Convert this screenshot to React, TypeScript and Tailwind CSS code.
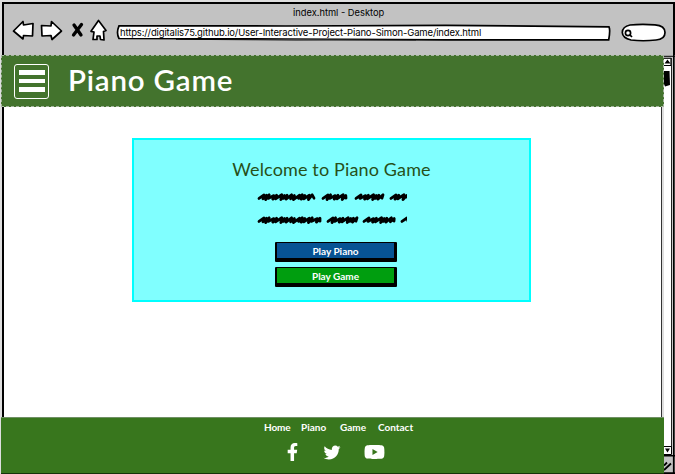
import React from "react";
import { FaFacebookF, FaTwitter, FaYoutube } from "react-icons/fa";

const links = [
  { label: "Home", box: "w-[26px] mr-[11px]", spacing: "tracking-[-0.1px]" },
  { label: "Piano", box: "w-[25px] mr-[14px]", spacing: "tracking-[0px]" },
  { label: "Game", box: "w-[27px] mr-[11px]", spacing: "tracking-[0px]" },
  { label: "Contact", box: "w-[36px]", spacing: "tracking-[0px]" },
];

function NavIcons() {
  return (
    <svg width="98" height="24" viewBox="11 18.5 98 24" fill="white" stroke="black" strokeWidth="1.7" strokeLinejoin="round" className="shrink-0">
      <path d="M13.5 30.5 L23 21 L23.5 24.5 L33 23 L32.5 35.5 L23.5 35 L23 38.5Z" />
      <path d="M41.5 25 L51 25.5 L51.5 21 L61.5 30.5 L52 39 L51 35 L42 35.5Z" />
      <path d="M74 24.5 L81 34.5 M81.5 24 L73.5 34.5" strokeWidth="3.3" strokeLinecap="round" />
      <path d="M98.5 20 L106 30 L103.5 31 L104 39.5 L100.5 39 L100 35.5 L97 35.5 L97 39 L93 39 L94 31.5 L91 30.8Z" />
    </svg>
  );
}

function AddressBar() {
  return (
    <div className="relative ml-[7px] mt-[5px] h-[18px] w-[495px] shrink-0">
      <svg width="495" height="18" viewBox="0 0 495 18" fill="white" stroke="black" className="absolute inset-0">
        <path strokeWidth="1.7" d="M3 1.8 L170 2 L330 1.4 L493 2.8 Q494.5 6 492.7 15.8 L330 15.9 L170 15 L3 14.5 Q0 9 3 1.8Z" />
        <path strokeWidth="1" d="M60 15.3 L180 16 L300 15.8" />
      </svg>
      <span className="absolute left-[4px] top-[2px] whitespace-nowrap text-[9.5px] leading-[13px] tracking-[-0.14px]">
        https://digitalis75.github.io/User-Interactive-Project-Piano-Simon-Game/index.html
      </span>
    </div>
  );
}

function SearchBox() {
  return (
    <svg width="46" height="20" viewBox="0 0 46 20" fill="white" stroke="black" strokeWidth="1.7" className="ml-[10px] mt-[4px] shrink-0">
      <path d="M9 2 Q20 .8 34 1.8 Q44 2.5 44 9.5 Q44 16.5 35 17 Q22 18.5 10 17 Q1.5 15 1.3 9.5 Q1.5 3.5 9 2Z" />
      <circle cx="7" cy="10" r="2.6" />
      <path d="M8.8 11.8 L11 14" />
    </svg>
  );
}

function Scribble({ second }: { second?: boolean }) {
  const words = second
    ? [[2, 64], [71, 100], [107, 138], [145, 152]]
    : [[2, 58], [66, 90], [99, 126], [134, 152]];
  return (
    <svg width="150" height="10" viewBox="0 0 150 10" fill="none" stroke="black" strokeWidth="2.8" strokeLinecap="round" strokeLinejoin="round" className="block">
      {words.map(([start, end], i) => {
        let path = `M${start} 6.4 L${start + 5} 3`;
        let n = i;
        for (let x = start + 5; x < end - 3; n++) {
          const step = [2.6, 2.6, 4.6, 2.8, 5.2][n % 5];
          const low = [6.8, 7.6, 6.4, 7.2][n % 4];
          const high = [3.2, 2.8, 3.6][n % 3];
          path += ` L${x - 1} ${low} L${Math.min(x + step, end)} ${high}`;
          x += step;
        }
        path += ` L${end - 1} 6.2`;
        return <path key={i} d={path} />;
      })}
    </svg>
  );
}

function GameButton({ label, color }: { label: string; color: string }) {
  return (
    <button className={`flex h-[20px] w-[122px] items-center justify-center rounded-[1px] border-b-[4px] border-l-2 border-r-[3px] border-t-[1.5px] border-black ${color} text-[10px] font-bold leading-[12px] text-white`}>
      {label}
    </button>
  );
}

function Scrollbar() {
  return (
    <svg width="11" height="419" viewBox="664 55 11 419" className="shrink-0">
      <path fill="white" d="M664 55h8v419h-8z" />
      <path fill="#c2c2c2" d="M664 55h8v11h-8zM664 456h9v17h-9z" />
      <path stroke="black" d="M664 56.3h11M664 58.3h7v7.2h-7" fill="none" />
      <path fill="white" d="M664 59h6v6h-6z" />
      <path d="M664.5 63.5 L667.5 59.5 L670.5 63.5Z" />
      <path d="M664 71 L669.5 71 L670 85 L665 86.5 L664 84Z" />
      <path stroke="#222" d="M671.5 58v396" />
      <path stroke="black" strokeWidth="1.8" d="M673.8 55v419" />
      <path fill="white" stroke="black" d="M664 446.5h7.5v8H664" />
      <path d="M665 448.5h5l-2.5 4zM664 455h11v1.5h-11z" />
      <path stroke="black" strokeWidth="1.8" d="M664 465.5l3-3M664 470l7-6.5M664 473.2h11" />
    </svg>
  );
}

export default function App() {
  return (
    <div className="flex h-[474px] w-[675px] flex-col overflow-hidden bg-[#dedede] font-[Lato,sans-serif] text-black">
      <div className="mt-[2px] ml-[2px] flex h-[53px] w-[673px] flex-col border-l-2 border-r-2 border-t-2 border-black bg-[#c2c2c2]">
        <div className="mt-[2px] h-[13px] pl-[289px] font-[Inter,sans-serif] text-[9.3px] leading-[13px]">index.html - Desktop</div>
        <div className="flex pl-[7px] font-[Inter,sans-serif]">
          <NavIcons />
          <AddressBar />
          <SearchBox />
        </div>
      </div>

      <div className="flex h-[419px]">
        <div className="flex w-[664px] flex-col">
          <header className="ml-[1px] flex h-[52px] items-center border border-dashed border-[#a6b5a0] bg-[#43732d] pl-[12px]">
            <button aria-label="Menu" className="flex h-[35px] w-[35px] flex-col items-center justify-center gap-[4px] rounded-[3px] border-[1.5px] border-white">
              <span className="h-[5px] w-[26px] bg-white" />
              <span className="h-[4px] w-[26px] bg-white" />
              <span className="h-[5px] w-[26px] bg-white" />
            </button>
            <h1 className="ml-[19px] whitespace-nowrap pb-[3px] text-[29.5px] font-semibold leading-[36px] tracking-[0.8px] text-white">Piano Game</h1>
          </header>

          <main className="ml-[2px] mr-[2px] h-[310px] border-l-2 border-r border-l-black border-r-[#333] bg-white pl-[128px] pt-[31px]">
            <section className="flex h-[164px] w-[399px] flex-col items-center border-2 border-[#00ffff] bg-[#80ffff]">
              <h2 className="mt-[17px] whitespace-nowrap text-[18px] leading-[24px] tracking-[0.15px] text-[#275019]">Welcome to Piano Game</h2>
              <div className="mt-[11px] flex flex-col gap-[13px]">
                <Scribble />
                <Scribble second />
              </div>
              <div className="ml-[9px] mt-[17px] flex flex-col gap-[5px]">
                <GameButton label="Play Piano" color="bg-[#075394]" />
                <GameButton label="Play Game" color="bg-[#009e0f]" />
              </div>
            </section>
          </main>

          <footer className="ml-[1px] flex h-[57px] flex-col border-b border-t border-b-[#143509] border-t-[#709065] bg-[#38761d] text-white">
            <nav className="mt-[2px] flex pl-[263px] text-[10px] font-bold leading-[14px]">
              {links.map((link) => (
                <a key={link.label} className={`${link.box} ${link.spacing} whitespace-nowrap`}>{link.label}</a>
              ))}
            </nav>
            <div className="mt-[8px] flex items-center pl-[285px]">
              <FaFacebookF className="h-[18px] w-[13px]" />
              <FaTwitter className="ml-[24px] h-[17px] w-[18px]" />
              <FaYoutube className="ml-[23px] h-[20px] w-[21px]" />
            </div>
          </footer>
        </div>
        <Scrollbar />
      </div>
    </div>
  );
}
